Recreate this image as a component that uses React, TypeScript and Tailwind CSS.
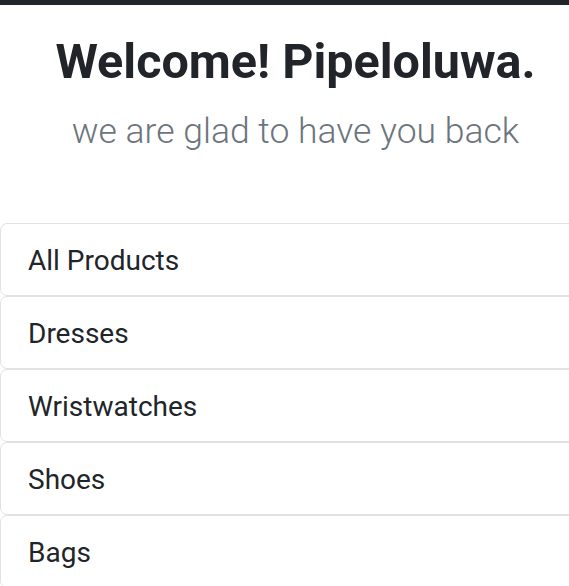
import React from "react";

const items = ["All Products", "Dresses", "Wristwatches", "Shoes", "Bags"];

export default function App() {
  return (
    <div
      className="w-[569px] h-[586px] overflow-hidden bg-white flex flex-col"
      style={{ fontFamily: "Roboto, 'Liberation Sans', sans-serif" }}
    >
      <div className="h-[5px] bg-[#212529] shrink-0" />
      <div className="flex flex-col items-center pt-[28px] pl-[22px]">
        <h1 className="text-[48.5px] leading-[58px] font-bold text-[#212529] whitespace-nowrap">
          Welcome! Pipeloluwa.
        </h1>
        <p className="mt-[19px] text-[35.5px] leading-[43px] font-light text-[#6c757d] whitespace-nowrap">
          we are glad to have you back
        </p>
      </div>
      <div className="mt-[70px] flex flex-col w-[600px] shrink-0">
        {items.map((it) => (
          <div
            key={it}
            className="h-[73px] shrink-0 border border-[#dfe2e5] rounded-[7px] flex items-center pl-[27px] pt-[2px] text-[28px] text-[#212529]"
          >
            {it}
          </div>
        ))}
      </div>
    </div>
  );
}
